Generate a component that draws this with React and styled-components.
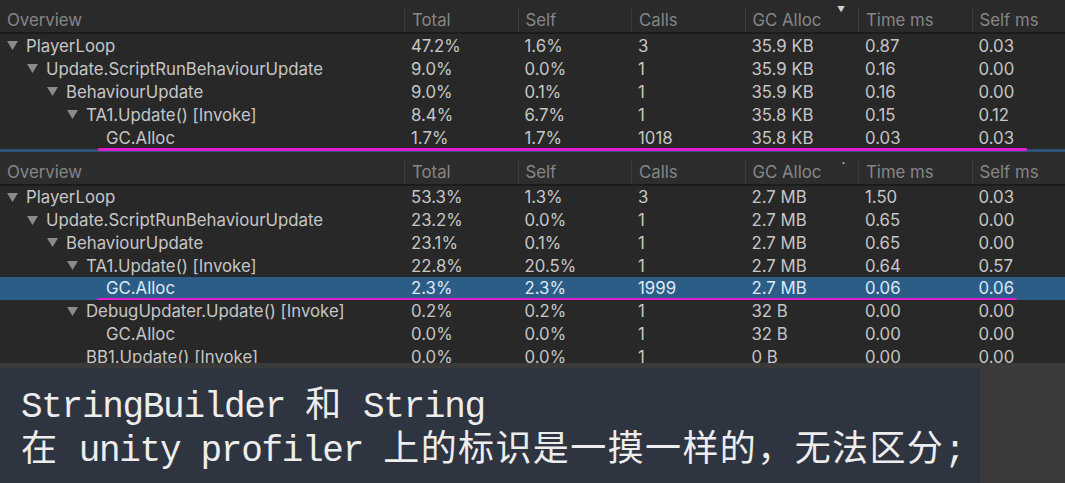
import React from 'react';
import styled, { createGlobalStyle } from 'styled-components';

const GlobalStyle = createGlobalStyle`
  html, body {
    margin: 0;
    padding: 0;
    background: #282828;
    overflow: hidden;
  }
`;

const COLUMNS = '404px 113.5px 113.5px 113.5px 113.5px 113.5px 1fr';
const HEADERS = ['Overview', 'Total', 'Self', 'Calls', 'GC Alloc', 'Time ms', 'Self ms'];

const Page = styled.div`
  width: 1065px;
  height: 483px;
  display: flex;
  flex-direction: column;
  background: #282828;
  font-family: Inter, 'Liberation Sans', sans-serif;
`;

const Panel = styled.div`
  position: relative;
  flex: none;
`;

const HeaderRow = styled.div`
  display: grid;
  grid-template-columns: ${COLUMNS};
  height: 34px;
  box-sizing: border-box;
  padding-top: 8px;
  background: ${(p) => p.$bg};
  border-bottom: 2px solid #1c1c1c;
`;

const HeaderCell = styled.div`
  position: relative;
  display: flex;
  align-items: center;
  padding-left: 7px;
  font-size: 16.8px;
  color: #868686;
  border-left: ${(p) => (p.$first ? 'none' : '1px solid #3d3d3d')};
  white-space: nowrap;
`;

const SortMark = styled.span`
  position: absolute;
  right: 13px;
  top: ${(p) => (p.$dot ? '0px' : '-3px')};
  font-size: ${(p) => (p.$dot ? '6px' : '8px')};
  color: #d0d0d0;
  line-height: 1;
`;

const Body = styled.div`
  height: ${(p) => p.$height}px;
  overflow: hidden;
  background: #282828;
`;

const Row = styled.div`
  display: grid;
  grid-template-columns: ${COLUMNS};
  height: ${(p) => p.$h}px;
  align-items: center;
  background: ${(p) => (p.$selected ? '#2c5d87' : 'transparent')};
  color: ${(p) => (p.$selected ? '#dfe9f3' : '#c6c6c6')};
  font-size: 16.8px;
`;

const NameCell = styled.div`
  display: flex;
  align-items: center;
  padding-left: ${(p) => 7 + p.$depth * 20}px;
  white-space: nowrap;
`;

const ArrowSlot = styled.span`
  width: 19px;
  flex: none;
  display: flex;
  align-items: center;
`;

const Cell = styled.div`
  padding-left: 7px;
  white-space: nowrap;
`;

const Rule = styled.div`
  height: 3px;
  background: #2b5277;
`;

const Underline = styled.div`
  position: absolute;
  top: ${(p) => p.$top}px;
  left: ${(p) => p.$left}px;
  width: ${(p) => p.$width}px;
  height: 2.5px;
  background: #e01bd2;
  border-radius: 1px;
`;

const Strip = styled.div`
  height: 5px;
  background: #3a3a3a;
`;

const Caption = styled.div`
  flex: 1;
  display: flex;
  background: #3a3a3a;
`;

const CaptionBox = styled.div`
  width: 980px;
  box-sizing: border-box;
  padding: 18px 0 0 21px;
  background: #2e3540;
  color: #ededed;
  font-family: 'Liberation Mono', 'Noto Sans CJK SC', monospace;
  font-size: 36px;
  letter-spacing: -1.3px;
  line-height: 44px;
  white-space: pre;
`;

const Han = styled.span`
  letter-spacing: 1.4px;
`;

const Arrow = () => (
  <svg width="11" height="9" viewBox="0 0 11 9">
    <polygon points="0,0 11,0 5.5,9" fill="#8b8b8b" />
  </svg>
);

const topRows = [
  { name: 'PlayerLoop', depth: 0, open: true, v: ['47.2%', '1.6%', '3', '35.9 KB', '0.87', '0.03'] },
  { name: 'Update.ScriptRunBehaviourUpdate', depth: 1, open: true, v: ['9.0%', '0.0%', '1', '35.9 KB', '0.16', '0.00'] },
  { name: 'BehaviourUpdate', depth: 2, open: true, v: ['9.0%', '0.1%', '1', '35.9 KB', '0.16', '0.00'] },
  { name: 'TA1.Update() [Invoke]', depth: 3, open: true, v: ['8.4%', '6.7%', '1', '35.8 KB', '0.15', '0.12'] },
  { name: 'GC.Alloc', depth: 4, v: ['1.7%', '1.7%', '1018', '35.8 KB', '0.03', '0.03'] },
];

const bottomRows = [
  { name: 'PlayerLoop', depth: 0, open: true, v: ['53.3%', '1.3%', '3', '2.7 MB', '1.50', '0.03'] },
  { name: 'Update.ScriptRunBehaviourUpdate', depth: 1, open: true, v: ['23.2%', '0.0%', '1', '2.7 MB', '0.65', '0.00'] },
  { name: 'BehaviourUpdate', depth: 2, open: true, v: ['23.1%', '0.1%', '1', '2.7 MB', '0.65', '0.00'] },
  { name: 'TA1.Update() [Invoke]', depth: 3, open: true, v: ['22.8%', '20.5%', '1', '2.7 MB', '0.64', '0.57'] },
  { name: 'GC.Alloc', depth: 4, selected: true, v: ['2.3%', '2.3%', '1999', '2.7 MB', '0.06', '0.06'] },
  { name: 'DebugUpdater.Update() [Invoke]', depth: 3, open: true, v: ['0.2%', '0.2%', '1', '32 B', '0.00', '0.00'] },
  { name: 'GC.Alloc', depth: 4, v: ['0.0%', '0.0%', '1', '32 B', '0.00', '0.00'] },
  { name: 'BB1.Update() [Invoke]', depth: 3, v: ['0.0%', '0.0%', '1', '0 B', '0.00', '0.00'] },
];

function ProfilerTable({ rows, rowHeight, bodyHeight, headerBg, sortDot }) {
  return (
    <>
      <HeaderRow $bg={headerBg}>
        {HEADERS.map((h, i) => (
          <HeaderCell key={h} $first={i === 0}>
            {h}
            {h === 'GC Alloc' && <SortMark $dot={sortDot}>{sortDot ? '•' : '▼'}</SortMark>}
          </HeaderCell>
        ))}
      </HeaderRow>
      <Body $height={bodyHeight}>
        {rows.map((r, i) => (
          <Row key={i} $h={rowHeight} $selected={r.selected}>
            <NameCell $depth={r.depth}>
              <ArrowSlot>{r.open && <Arrow />}</ArrowSlot>
              {r.name}
            </NameCell>
            {r.v.map((val, j) => (
              <Cell key={j}>{val}</Cell>
            ))}
          </Row>
        ))}
      </Body>
    </>
  );
}

export default function App() {
  return (
    <Page>
      <GlobalStyle />
      <Panel>
        <ProfilerTable rows={topRows} rowHeight={23} bodyHeight={115} headerBg="#2a2a2a" />
        <Rule />
        <Underline $top={148} $left={98} $width={929} />
      </Panel>
      <Panel>
        <ProfilerTable rows={bottomRows} rowHeight={22.75} bodyHeight={177} headerBg="#2d2d2d" sortDot />
        <Underline $top={145.5} $left={97} $width={920} />
      </Panel>
      <Strip />
      <Caption>
        <CaptionBox>
          {'StringBuilder '}<Han>和</Han>{' String\n'}
          <Han>在</Han>{' unity profiler '}<Han>上的标识是一摸一样的，无法区分</Han>{';'}
        </CaptionBox>
      </Caption>
    </Page>
  );
}
